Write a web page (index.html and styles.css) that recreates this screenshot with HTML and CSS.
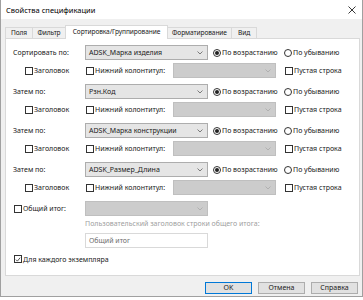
FILE: index.html
```html
<!DOCTYPE html>
<html lang="ru">
<head>
    <meta charset="UTF-8">
    <title>Свойства спецификации</title>
    <link rel="stylesheet" href="styles.css">
</head>
<body>
    <div class="window">
        <div class="titlebar">
            <span class="title">Свойства спецификации</span>
            <svg class="close" width="8" height="8" viewBox="0 0 8 8"><path d="M0.5 0.5 L7.5 7.5 M7.5 0.5 L0.5 7.5" stroke="#222" stroke-width="0.9"/></svg>
        </div>
        <div class="client">
            <div class="tabs">
                <div class="tab t-fields">Поля</div>
                <div class="tab t-filter">Фильтр</div>
                <div class="tab t-sort active">Сортировка/Группирование</div>
                <div class="tab t-format">Форматирование</div>
                <div class="tab t-view">Вид</div>
            </div>
            <div class="panel">
                <div class="group">
                    <div class="row">
                        <span class="lbl">Сортировать по:</span>
                        <div class="combo"><span>ADSK_Марка изделия</span><svg width="6" height="4" viewBox="0 0 6 4"><path d="M0.5 0.5 L3 3 L5.5 0.5" fill="none" stroke="#606060" stroke-width="0.8"/></svg></div>
                        <label class="radio asc"><span class="dot on"></span>По возрастанию</label>
                        <label class="radio"><span class="dot"></span>По убыванию</label>
                    </div>
                    <div class="row sub">
                        <label class="check head"><span class="box"></span>Заголовок</label>
                        <label class="check foot"><span class="box"></span>Нижний колонтитул:</label>
                        <div class="combo off"><span></span><svg width="6" height="4" viewBox="0 0 6 4"><path d="M0.5 0.5 L3 3 L5.5 0.5" fill="none" stroke="#a8a8a8" stroke-width="0.8"/></svg></div>
                        <label class="check blank"><span class="box"></span>Пустая строка</label>
                    </div>
                </div>
                <div class="group">
                    <div class="row">
                        <span class="lbl">Затем по:</span>
                        <div class="combo"><span>Рзн.Код</span><svg width="6" height="4" viewBox="0 0 6 4"><path d="M0.5 0.5 L3 3 L5.5 0.5" fill="none" stroke="#606060" stroke-width="0.8"/></svg></div>
                        <label class="radio asc"><span class="dot on"></span>По возрастанию</label>
                        <label class="radio"><span class="dot"></span>По убыванию</label>
                    </div>
                    <div class="row sub">
                        <label class="check head"><span class="box"></span>Заголовок</label>
                        <label class="check foot"><span class="box"></span>Нижний колонтитул:</label>
                        <div class="combo off"><span></span><svg width="6" height="4" viewBox="0 0 6 4"><path d="M0.5 0.5 L3 3 L5.5 0.5" fill="none" stroke="#a8a8a8" stroke-width="0.8"/></svg></div>
                        <label class="check blank"><span class="box"></span>Пустая строка</label>
                    </div>
                </div>
                <div class="group">
                    <div class="row">
                        <span class="lbl">Затем по:</span>
                        <div class="combo"><span>ADSK_Марка конструкции</span><svg width="6" height="4" viewBox="0 0 6 4"><path d="M0.5 0.5 L3 3 L5.5 0.5" fill="none" stroke="#606060" stroke-width="0.8"/></svg></div>
                        <label class="radio asc"><span class="dot on"></span>По возрастанию</label>
                        <label class="radio"><span class="dot"></span>По убыванию</label>
                    </div>
                    <div class="row sub">
                        <label class="check head"><span class="box"></span>Заголовок</label>
                        <label class="check foot"><span class="box"></span>Нижний колонтитул:</label>
                        <div class="combo off"><span></span><svg width="6" height="4" viewBox="0 0 6 4"><path d="M0.5 0.5 L3 3 L5.5 0.5" fill="none" stroke="#a8a8a8" stroke-width="0.8"/></svg></div>
                        <label class="check blank"><span class="box"></span>Пустая строка</label>
                    </div>
                </div>
                <div class="group">
                    <div class="row">
                        <span class="lbl">Затем по:</span>
                        <div class="combo"><span>ADSK_Размер_Длина</span><svg width="6" height="4" viewBox="0 0 6 4"><path d="M0.5 0.5 L3 3 L5.5 0.5" fill="none" stroke="#606060" stroke-width="0.8"/></svg></div>
                        <label class="radio asc"><span class="dot on"></span>По возрастанию</label>
                        <label class="radio"><span class="dot"></span>По убыванию</label>
                    </div>
                    <div class="row sub">
                        <label class="check head"><span class="box"></span>Заголовок</label>
                        <label class="check foot"><span class="box"></span>Нижний колонтитул:</label>
                        <div class="combo off"><span></span><svg width="6" height="4" viewBox="0 0 6 4"><path d="M0.5 0.5 L3 3 L5.5 0.5" fill="none" stroke="#a8a8a8" stroke-width="0.8"/></svg></div>
                        <label class="check blank"><span class="box"></span>Пустая строка</label>
                    </div>
                </div>

                <div class="row total">
                    <label class="check lbl"><span class="box"></span>Общий итог:</label>
                    <div class="combo off"><span></span><svg width="6" height="4" viewBox="0 0 6 4"><path d="M0.5 0.5 L3 3 L5.5 0.5" fill="none" stroke="#a8a8a8" stroke-width="0.8"/></svg></div>
                </div>
                <div class="caption">Пользовательский заголовок строки общего итога:</div>
                <div class="textbox">Общий итог</div>
                <label class="check each"><span class="box checked"><svg width="7" height="7" viewBox="0 0 7 7"><path d="M1 3.6 L2.8 5.4 L6 1.4" fill="none" stroke="#222" stroke-width="0.9"/></svg></span>Для каждого экземпляра</label>
            </div>
            <div class="buttons">
                <button class="default">OK</button>
                <button>Отмена</button>
                <button>Справка</button>
            </div>
        </div>
    </div>
</body>
</html>
```

FILE: styles.css
```css
* {
    margin: 0;
    padding: 0;
    box-sizing: border-box;
    font-family: "Noto Sans", sans-serif;
}

body {
    background: #ffffff;
    font-size: 7px;
    color: #1a1a1a;
}

.window {
    width: 363px;
    height: 297px;
    border: 1px solid #a0a0a0;
    border-top: none;
    background: #f0f0f0;
}

.titlebar {
    height: 19px;
    background: #ffffff;
    display: flex;
    align-items: center;
    justify-content: space-between;
    padding: 0 6px 0 5px;
}

.title {
    font-size: 7.5px;
    color: #000000;
}

.client {
    padding: 6px 2px 0 4px;
}

/* Вкладки */
.tabs {
    display: flex;
    align-items: flex-end;
    height: 13px;
}

.tab {
    height: 11px;
    line-height: 10px;
    border: 1px solid #d9d9d9;
    border-bottom: none;
    margin-right: -1px;
    background: #f0f0f0;
    white-space: nowrap;
    text-align: center;
    font-size: 6.6px;
    letter-spacing: -0.1px;
}

.t-fields { width: 28px; }
.t-filter { width: 34px; }
.t-sort { width: 103px; }
.t-format { width: 65px; }
.t-view { width: 26px; }

.tab.active {
    height: 14px;
    line-height: 12px;
    background: #ffffff;
    position: relative;
    z-index: 1;
    margin-bottom: -1px;
}

.panel {
    height: 238px;
    background: #ffffff;
    border: 1px solid #d9d9d9;
    padding: 6px 0 0 7px;
}

.group {
    margin-bottom: 6px;
}

.row {
    display: flex;
    align-items: center;
    height: 15px;
}

.row.sub {
    margin-top: 3px;
    padding-left: 12px;
}

.lbl {
    width: 72px;
}

.combo {
    width: 123px;
    height: 15px;
    background: #e5e5e5;
    border: 1px solid #adadad;
    display: flex;
    align-items: center;
    justify-content: space-between;
    padding: 0 4px 0 3px;
}

.combo.off {
    width: 103px;
    background: #cccccc;
    border-color: #bfbfbf;
}

.total .combo.off {
    width: 123px;
}

.radio,
.check {
    display: flex;
    align-items: center;
    white-space: nowrap;
}

.radio.asc {
    width: 71px;
    margin-left: 5px;
}

.dot {
    width: 8px;
    height: 8px;
    border: 1px solid #333333;
    border-radius: 50%;
    margin-right: 1px;
    background: #ffffff;
    display: flex;
    align-items: center;
    justify-content: center;
}

.dot.on::after {
    content: "";
    width: 4px;
    height: 4px;
    border-radius: 50%;
    background: #222222;
}

.box {
    width: 8px;
    height: 8px;
    border: 1px solid #333333;
    background: #ffffff;
    margin-right: 1px;
    display: flex;
    align-items: center;
    justify-content: center;
}

.check.head {
    width: 61px;
}

.check.foot {
    width: 87px;
}

.check.blank {
    margin-left: 9px;
}

.row.total {
    margin-top: 3px;
}

.total .lbl {
    padding-left: 1px;
}

.caption {
    margin: 3px 0 0 72px;
    height: 10px;
    line-height: 10px;
    color: #a0a0a0;
}

.textbox {
    margin: 4px 0 0 72px;
    width: 123px;
    height: 15px;
    border: 1px solid #d9d9d9;
    line-height: 13px;
    padding-left: 3px;
    color: #6d6d6d;
}

.check.each {
    margin-top: 6px;
    height: 10px;
    padding-left: 1px;
}

.buttons {
    display: flex;
    justify-content: flex-end;
    gap: 6px;
    margin-top: 6px;
    padding-right: 2px;
}

button {
    width: 47px;
    height: 12px;
    background: #e1e1e1;
    border: 1px solid #adadad;
    font-size: 7px;
    color: #1a1a1a;
    line-height: 10px;
}

button.default {
    border-color: #0078d7;
}
```
